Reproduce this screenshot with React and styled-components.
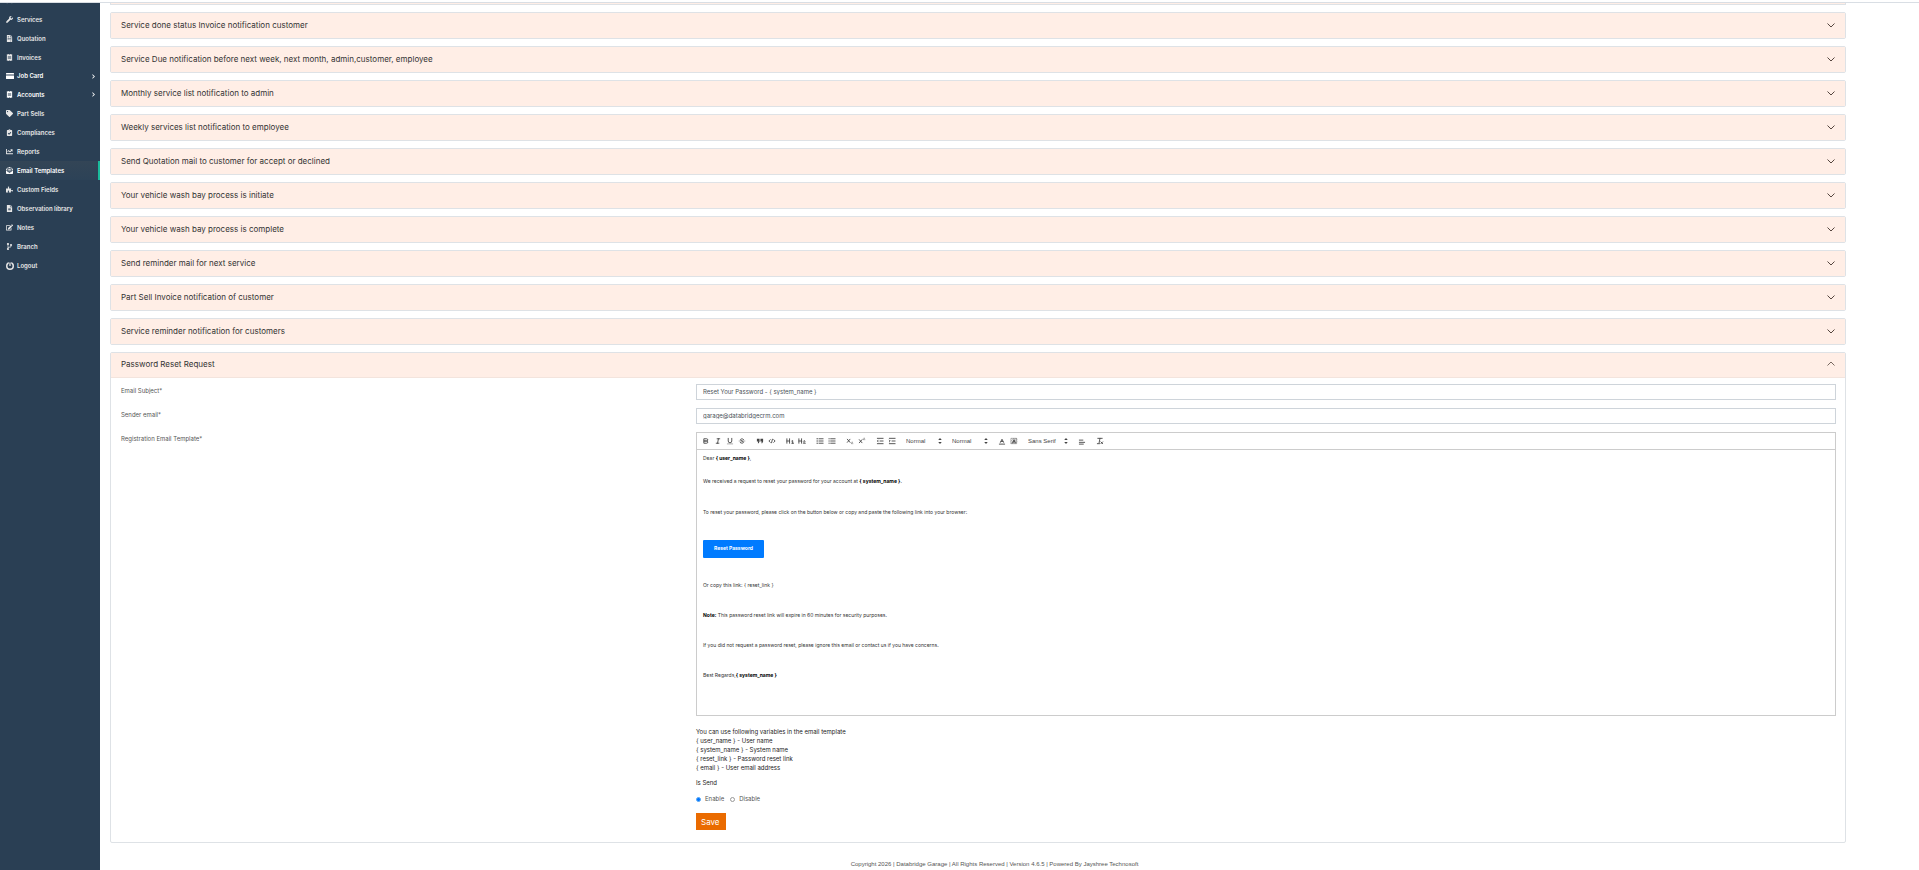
import { useState } from "react";
import styled, { createGlobalStyle } from "styled-components";
import {
    FaWrench,
    FaFileInvoice,
    FaReceipt,
    FaTag,
    FaClipboardCheck,
    FaChartLine,
    FaEnvelopeOpenText,
    FaPuzzlePiece,
    FaFileAlt,
    FaEdit,
    FaCodeBranch,
    FaChevronRight,
    FaCar,
} from "react-icons/fa";

const GlobalStyle = createGlobalStyle`
  * {
    box-sizing: border-box;
  }
  body {
    margin: 0;
    background: #fff;
    color: #333;
    font-family: Inter, "Open Sans", sans-serif;
    font-size: 6px;
    line-height: 8px;
  }
  button, input, select {
    font-family: inherit;
  }
`;

const Page = styled.div`
  display: flex;
  flex-direction: column;
  min-height: 100vh;
`;

const TopBar = styled.header`
  height: 3px;
  border-bottom: 1px solid #d9dee4;
`;

const Body = styled.div`
  display: flex;
  flex: 1;
`;

/* ---------- sidebar ---------- */

const Sidebar = styled.nav`
  width: 100px;
  flex-shrink: 0;
  overflow: hidden;
  background: #2a3f54;
`;

const Menu = styled.ul`
  list-style: none;
  margin: -12px 0 0;
  padding: 0;
`;

const MenuLink = styled.a`
  display: flex;
  align-items: center;
  height: ${({ $short }) => ($short ? "18px" : "19px")};
  padding: 0 2px 0 6px;
  border-right: 2px solid ${({ $active }) => ($active ? "#1abb9c" : "transparent")};
  background: ${({ $active }) => ($active ? "linear-gradient(#334556, #2c4257)" : "none")};
  color: ${({ $bright }) => ($bright ? "#fff" : "#e7e7e7")};
  font-size: 6px;
  font-weight: 600;
  text-decoration: none;
  white-space: nowrap;
`;

const MenuIcon = styled.span`
  display: flex;
  width: 11px;

  svg {
    width: ${({ $wide }) => ($wide ? "8px" : "7px")};
    height: ${({ $wide }) => ($wide ? "8px" : "7px")};
  }
`;

const MenuArrow = styled(FaChevronRight)`
  width: 5px;
  height: 5px;
  margin-left: auto;
`;

const CardIcon = () => (
    <svg viewBox="0 0 16 16" fill="currentColor" aria-hidden="true">
        <path d="M1 2h14a1 1 0 0 1 1 1v2H0V3a1 1 0 0 1 1-1zM0 7h16v6a1 1 0 0 1-1 1H1a1 1 0 0 1-1-1z" />
    </svg>
);

const LogoutIcon = () => (
    <svg viewBox="0 0 16 16" fill="none" stroke="currentColor" aria-hidden="true">
        <circle cx="8" cy="8" r="6.500" strokeWidth="3" />
        <path d="M8 0v8" stroke="#2a3f54" strokeWidth="5" />
        <path d="M8 1v7" strokeWidth="2.500" />
    </svg>
);

const menu = [
    { name: "Services", icon: FaWrench },
    { name: "Quotation", icon: FaFileInvoice },
    { name: "Invoices", icon: FaReceipt },
    { name: "Job Card", icon: CardIcon, group: true, short: true, wide: true },
    { name: "Accounts", icon: FaReceipt, group: true },
    { name: "Part Sells", icon: FaTag },
    { name: "Compliances", icon: FaClipboardCheck },
    { name: "Reports", icon: FaChartLine },
    { name: "Email Templates", icon: FaEnvelopeOpenText, active: true },
    { name: "Custom Fields", icon: FaPuzzlePiece },
    { name: "Observation library", icon: FaFileAlt },
    { name: "Notes", icon: FaEdit },
    { name: "Branch", icon: FaCodeBranch },
    { name: "Logout", icon: LogoutIcon, wide: true },
];

/* ---------- accordion ---------- */

const Main = styled.main`
  flex: 1;
  min-width: 0;
  padding: 0 73px 0 10px;
`;

const CardTail = styled.div`
  height: 2px;
  border: 1px solid #dee2e6;
  border-top: 0;
  background: #ffeee6;
`;

const Card = styled.section`
  margin-top: 7px;
  border: 1px solid #dee2e6;
  border-radius: 2px;
`;

const CardHeader = styled.button`
  display: flex;
  align-items: center;
  justify-content: space-between;
  width: 100%;
  height: 25px;
  padding: 0 10px 2px;
  border: 0;
  border-bottom: ${({ $open }) => ($open ? "1px solid #f3e4dd" : "0")};
  background: #ffeee6;
  color: #333;
  font-size: 8px;
  text-align: left;
  cursor: pointer;
`;

const ArrowSvg = styled.svg`
  width: 8px;
  height: 8px;
  fill: none;
  stroke: ${({ $open }) => ($open ? "#77685f" : "#55463f")};
  transform: ${({ $open }) => ($open ? "rotate(180deg)" : "none")};
`;

const Arrow = ({ open }) => (
    <ArrowSvg viewBox="0 0 8 8" $open={open} aria-hidden="true">
        <path d="M0.500 2.500 L4 6 L7.500 2.500" />
    </ArrowSvg>
);

const titles = [
    "Service done status Invoice notification customer",
    "Service Due notification before next week, next month, admin,customer, employee",
    "Monthly service list notification to admin",
    "Weekly services list notification to employee",
    "Send Quotation mail to customer for accept or declined",
    "Your vehicle wash bay process is initiate",
    "Your vehicle wash bay process is complete",
    "Send reminder mail for next service",
    "Part Sell Invoice notification of customer",
    "Service reminder notification for customers",
];

/* ---------- form ---------- */

const Form = styled.form`
  display: flex;
  flex-direction: column;
  gap: 8px;
  padding: 6px 9px 12px 10px;
`;

const Row = styled.div`
  display: grid;
  grid-template-columns: 1fr 2fr;
  column-gap: 5px;
`;

const Label = styled.label`
  padding-top: 3px;
  color: #555;
`;

const Input = styled.input`
  width: 100%;
  height: 16px;
  padding: 0 6px 1px;
  border: 1px solid #ced4da;
  color: #495057;
  font-size: 6px;
`;

const Toolbar = styled.div`
  display: flex;
  align-items: center;
  gap: 6px;
  height: 18px;
  padding-left: 3px;
  border: 1px solid #ccc;
`;

const Formats = styled.div`
  display: flex;
`;

const ToolButton = styled.button`
  display: flex;
  align-items: center;
  justify-content: center;
  width: 12px;
  height: 12px;
  padding: 0;
  border: 0;
  background: none;
  cursor: pointer;
`;

const Glyph = styled.svg`
  width: 8px;
  height: 8px;
  fill: none;
  stroke: #444;
  stroke-width: 2;
  stroke-linecap: round;
  stroke-linejoin: round;

  .fill {
    fill: #444;
    stroke: none;
  }
  .thin {
    stroke-width: 1;
  }
`;

const Picker = styled.label`
  display: flex;
  align-items: center;
  width: ${({ $wide }) => ($wide ? "44px" : "40px")};
`;

const PickerSelect = styled.select`
  flex: 1;
  min-width: 0;
  padding: 0 0 0 2px;
  border: 0;
  background: none;
  appearance: none;
  color: #444;
  font-family: "Liberation Sans", Arial, sans-serif;
  font-size: 6px;
`;

const Editor = styled.div`
  height: 266px;
  padding: 4px 6px;
  border: 1px solid #ccc;
  border-top: 0;
  color: #333;
  font-size: 5px;
  outline: none;

  p {
    margin: 0 0 23px;
  }
  p:first-child {
    margin-bottom: 15px;
  }
  a ~ p {
    margin-bottom: 22px;
  }
  b {
    color: #000;
  }
`;

const ResetLink = styled.a`
  display: block;
  width: fit-content;
  margin: 24px 0 23px;
  padding: 4px 11px 6px;
  border-radius: 1px;
  background: #007bff;
  color: #fff;
  font-weight: 700;
  text-decoration: none;
`;

const Help = styled.div`
  margin-top: 11px;
  color: #222;
  line-height: 9px;
`;

const IsSend = styled.fieldset`
  margin: 7px 0 0;
  padding: 0;
  border: 0;
  color: #555;

  legend {
    padding: 0;
    color: #222;
  }
`;

const Radios = styled.div`
  display: flex;
  gap: 6px;
  margin-top: 8px;
`;

const RadioLabel = styled.label`
  display: flex;
  align-items: center;
  gap: 4px;
`;

const Radio = styled.input`
  appearance: none;
  width: 5px;
  height: 5px;
  margin: 0;
  border: 1px solid #999;
  border-radius: 50%;

  &:checked {
    border-color: #5aa9f5;
    background: #0075ff;
  }
`;

const SaveButton = styled.button`
  height: 17px;
  margin-top: 10px;
  padding: 0 6px 0 5px;
  border: 0;
  background: #ea6b00;
  color: #fff;
  font-size: 8px;
  cursor: pointer;
`;

const Footer = styled.footer`
  margin-right: -33px;
  padding: 17px 0 2px;
  color: #555;
  font-family: "Liberation Sans", Arial, sans-serif;
  text-align: center;
`;

const glyphs = {
    bold: <path d="M5 4h5.5a2.5 2.5 0 0 1 0 5H5zM5 9h5.5a2.5 2.5 0 0 1 0 5H5z" />,
    italic: <path d="M7 4h6M5 14h6M8 14l2-10" />,
    underline: <><path d="M5 3v6a4 4 0 0 0 8 0V3" /><path className="thin" d="M3 15.500h12" /></>,
    strike: <><path className="thin" d="M2.500 9h13" /><path d="M12.500 5.500C10 3 5.500 4 5.500 6.500S12.500 9 12.500 11.500 8 15 5 12.500" /></>,
    quote: <path className="fill" d="M2 4h6v6l-2 4H4l1-4H2zM10 4h6v6l-2 4h-2l1-4h-3z" />,
    code: <path d="M5 6L2 9l3 3M13 6l3 3-3 3M10 5L8 13" />,
    h1: <path d="M2 4v10M8 4v10M2 9h6M13 9l2-1v6M13 14h4" />,
    h2: <path d="M2 4v10M8 4v10M2 9h6M12 9.500c1-2 4-1.500 4 0 0 1.500-4 3-4 4.500h4.500" />,
    ordered: <path d="M7 4h9M7 9h9M7 14h9M2 4h2M2 9h2M2 14h2" />,
    bullet: <path d="M6 4h10M6 9h10M6 14h10M2 4h1M2 9h1M2 14h1" />,
    sub: <><path d="M3 5l6 7M9 5l-6 7" /><path className="thin" d="M12 12c1-1.500 3-1 3 0s-3 2-3 3h3.500" /></>,
    sup: <><path d="M3 6l6 7M9 6l-6 7" /><path className="thin" d="M12 3c1-1.500 3-1 3 0s-3 2-3 3h3.500" /></>,
    outdent: <path d="M3 3h13M9 9h7M3 15h13M5 7L3 9l2 2" />,
    indent: <path d="M3 3h13M9 9h7M3 15h13M3 7l2 2-2 2" />,
    color: <><path d="M5.500 12L9 5l3.500 7M7 10h4" /><path d="M3 16h12" /></>,
    background: <><path className="thin" d="M3 3h12v12H3zM3 9l6-6M3 14l11-11M6 15l9-9M11 15l4-4" /><path d="M6 13l3-7 3 7M7 11h4" /></>,
    align: <path d="M3 7h8M3 12h12M3 16h9" />,
    clean: <><path d="M4 3h10M9 3L7 13M3 15h5" /><path d="M11 11l4 4M15 11l-4 4" /></>,
    picker: <path className="fill" d="M9 2l4 5H5zM9 16l4-5H5z" />,
};

const Icon = ({ name }) => (
    <Glyph viewBox="0 0 18 18" aria-hidden="true">{glyphs[name]}</Glyph>
);

const Tools = ({ names }) => (
    <Formats>
        {names.map((name) => (
            <ToolButton key={name} type="button" aria-label={name}>
                <Icon name={name} />
            </ToolButton>
        ))}
    </Formats>
);

const ToolPicker = ({ label, value, wide }) => (
    <Picker $wide={wide}>
        <PickerSelect aria-label={label}>
            <option>{value}</option>
        </PickerSelect>
        <Icon name="picker" />
    </Picker>
);

const PasswordForm = () => {
    const [subject, setSubject] = useState("Reset Your Password - { system_name }");
    const [sender, setSender] = useState("garage@databridgecrm.com");
    const [send, setSend] = useState("Enable");

    return (
        <Form onSubmit={(e) => e.preventDefault()}>
            <Row>
                <Label htmlFor="subject">Email Subject*</Label>
                <Input id="subject" value={subject} onChange={(e) => setSubject(e.target.value)} />
            </Row>
            <Row>
                <Label htmlFor="sender">Sender email*</Label>
                <Input id="sender" value={sender} onChange={(e) => setSender(e.target.value)} />
            </Row>
            <Row>
                <Label as="span" id="template-label">Registration Email Template*</Label>
                <div>
                    <Toolbar>
                        <Tools names={["bold", "italic", "underline", "strike"]} />
                        <Tools names={["quote", "code"]} />
                        <Tools names={["h1", "h2"]} />
                        <Tools names={["ordered", "bullet"]} />
                        <Tools names={["sub", "sup"]} />
                        <Tools names={["outdent", "indent"]} />
                        <ToolPicker label="Size" value="Normal" />
                        <ToolPicker label="Heading" value="Normal" />
                        <Tools names={["color", "background"]} />
                        <ToolPicker label="Font" value="Sans Serif" wide />
                        <Tools names={["align"]} />
                        <Tools names={["clean"]} />
                    </Toolbar>
                    <Editor
                        role="textbox"
                        aria-multiline="true"
                        aria-labelledby="template-label"
                        contentEditable
                        suppressContentEditableWarning
                        spellCheck={false}
                    >
                        <p>Dear <b>{"{ user_name }"}</b>,</p>
                        <p>We received a request to reset your password for your account at <b>{"{ system_name }"}</b>.</p>
                        <p>To reset your password, please click on the button below or copy and paste the following link into your browser:</p>
                        <ResetLink href="#reset">Reset Password</ResetLink>
                        <p>Or copy this link: {"{ reset_link }"}</p>
                        <p><b>Note:</b> This password reset link will expire in 60 minutes for security purposes.</p>
                        <p>If you did not request a password reset, please ignore this email or contact us if you have concerns.</p>
                        <p>Best Regards,<b>{"{ system_name }"}</b></p>
                    </Editor>

                    <Help>
                        <div>You can use following variables in the email template</div>
                        <div>{"{ user_name } - User name"}</div>
                        <div>{"{ system_name } - System name"}</div>
                        <div>{"{ reset_link } - Password reset link"}</div>
                        <div>{"{ email } - User email address"}</div>
                    </Help>

                    <IsSend>
                        <legend>Is Send</legend>
                        <Radios>
                            {["Enable", "Disable"].map((option) => (
                                <RadioLabel key={option}>
                                    <Radio
                                        type="radio"
                                        name="send"
                                        checked={send === option}
                                        onChange={() => setSend(option)}
                                    />
                                    {option}
                                </RadioLabel>
                            ))}
                        </Radios>
                    </IsSend>

                    <SaveButton type="submit">Save</SaveButton>
                </div>
            </Row>
        </Form>
    );
};

const App = () => {
    const [open, setOpen] = useState(true);

    return (
        <>
            <GlobalStyle />
            <Page>
                <TopBar />
                <Body>
                    <Sidebar>
                        <Menu>
                            <li>
                                <MenuLink href="#vehicles" aria-label="Vehicles">
                                    <MenuIcon><FaCar /></MenuIcon>
                                </MenuLink>
                            </li>
                            {menu.map(({ name, icon: ItemIcon, group, active, short, wide }) => (
                                <li key={name}>
                                    <MenuLink href="#menu" $short={short} $active={active} $bright={group || active}>
                                        <MenuIcon $wide={wide}><ItemIcon /></MenuIcon>
                                        {name}
                                        {group && <MenuArrow />}
                                    </MenuLink>
                                </li>
                            ))}
                        </Menu>
                    </Sidebar>

                    <Main>
                        <CardTail />
                        {titles.map((title) => (
                            <Card key={title}>
                                <CardHeader type="button" aria-expanded="false">
                                    {title}
                                    <Arrow />
                                </CardHeader>
                            </Card>
                        ))}
                        <Card>
                            <CardHeader
                                type="button"
                                $open={open}
                                aria-expanded={open}
                                onClick={() => setOpen(!open)}
                            >
                                Password Reset Request
                                <Arrow open={open} />
                            </CardHeader>
                            {open && <PasswordForm />}
                        </Card>
                        <Footer>
                            Copyright 2026 | Databridge Garage | All Rights Reserved | Version 4.6.5 | Powered By Jayshree Technosoft
                        </Footer>
                    </Main>
                </Body>
            </Page>
        </>
    );
};

export default App;
